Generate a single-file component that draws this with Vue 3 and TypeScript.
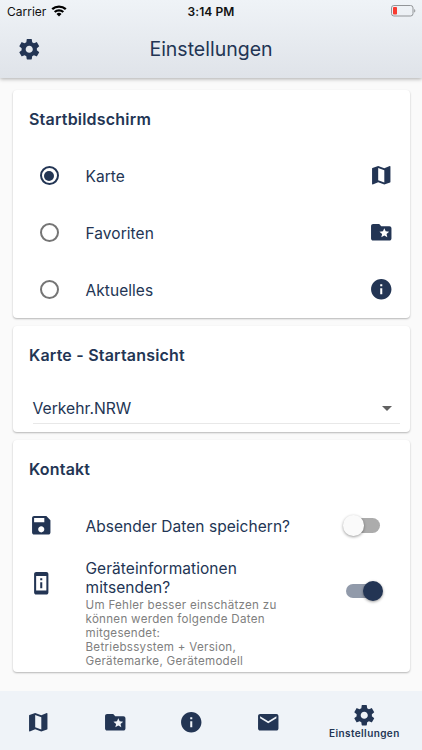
<script setup lang="ts">
import { ref } from 'vue'

const icons = {
  map: 'M20.5 3l-.16.03L15 5.1 9 3 3.36 4.9c-.21.07-.36.25-.36.48V20.5c0 .28.22.5.5.5l.16-.03L9 18.9l6 2.1 5.64-1.9c.21-.07.36-.25.36-.48V3.5c0-.28-.22-.5-.5-.5zM15 19l-6-2.11V5l6 2.11V19z',
  folder: 'M20 6h-8l-2-2H4c-1.1 0-2 .9-2 2v12c0 1.1.9 2 2 2h16c1.1 0 2-.9 2-2V8c0-1.1-.9-2-2-2zm-2.06 11L15 15.28 12.06 17l.78-3.33-2.59-2.24 3.41-.29L15 8l1.34 3.14 3.41.29-2.59 2.24.78 3.33z',
  info: 'M12 2C6.48 2 2 6.48 2 12s4.48 10 10 10 10-4.48 10-10S17.52 2 12 2zm1 15h-2v-6h2v6zm0-8h-2V7h2v2z',
  mail: 'M20 4H4c-1.1 0-1.99.9-1.99 2L2 18c0 1.1.9 2 2 2h16c1.1 0 2-.9 2-2V6c0-1.1-.9-2-2-2zm0 4l-8 5-8-5V6l8 5 8-5v2z',
  settings: 'M19.43 12.98c.04-.32.07-.64.07-.98s-.03-.66-.07-.98l2.11-1.65c.19-.15.24-.42.12-.64l-2-3.46c-.12-.22-.39-.3-.61-.22l-2.49 1c-.52-.4-1.08-.73-1.69-.98l-.38-2.65C14.46 2.18 14.25 2 14 2h-4c-.25 0-.46.18-.49.42l-.38 2.65c-.61.25-1.17.59-1.69.98l-2.49-1c-.23-.09-.49 0-.61.22l-2 3.46c-.13.22-.07.49.12.64l2.11 1.65c-.04.32-.07.65-.07.98s.03.66.07.98l-2.11 1.65c-.19.15-.24.42-.12.64l2 3.46c.12.22.39.3.61.22l2.49-1c.52.4 1.08.73 1.69.98l.38 2.65c.03.24.24.42.49.42h4c.25 0 .46-.18.49-.42l.38-2.65c.61-.25 1.17-.59 1.69-.98l2.49 1c.23.09.49 0 .61-.22l2-3.46c.12-.22.07-.49-.12-.64l-2.11-1.65zM12 15.5c-1.93 0-3.5-1.57-3.5-3.5s1.57-3.5 3.5-3.5 3.5 1.57 3.5 3.5-1.57 3.5-3.5 3.5z',
  save: 'M17 3H5c-1.11 0-2 .9-2 2v14c0 1.1.89 2 2 2h14c1.1 0 2-.9 2-2V7l-4-4zm-5 16c-1.66 0-3-1.34-3-3s1.34-3 3-3 3 1.34 3 3-1.34 3-3 3zm3-10H5V5h10v4z',
  device: 'M13 7h-2v2h2V7zm0 4h-2v6h2v-6zm4-9.99L7 1c-1.1 0-2 .9-2 2v18c0 1.1.9 2 2 2h10c1.1 0 2-.9 2-2V3c0-1.1-.9-1.99-2-1.99zM17 19H7V5h10v14z',
}

type IconName = keyof typeof icons

const screens: { label: string; icon: IconName }[] = [
  { label: 'Karte', icon: 'map' },
  { label: 'Favoriten', icon: 'folder' },
  { label: 'Aktuelles', icon: 'info' },
]

const tabs: { icon: IconName; label?: string }[] = [
  { icon: 'map' },
  { icon: 'folder' },
  { icon: 'info' },
  { icon: 'mail' },
  { icon: 'settings', label: 'Einstellungen' },
]

const startScreen = ref('Karte')
const saveSender = ref(false)
const sendDevice = ref(true)
</script>

<template>
  <div class="screen">
    <header class="header">
      <div class="status">
        <div class="carrier">
          <span>Carrier</span>
          <svg class="wifi" viewBox="0 0 16 12">
            <path d="M1.2 4.2a10 10 0 0 1 13.6 0" />
            <path d="M3.7 7a6.3 6.3 0 0 1 8.6 0" />
            <path class="dot" d="M8 11.6L5.5 8.9a3.6 3.6 0 0 1 5 0z" />
          </svg>
        </div>
        <span class="time">3:14 PM</span>
        <div class="power">
          <svg class="battery" viewBox="0 0 25 12">
            <rect class="shell" x=".5" y=".5" width="21.5" height="10.5" rx="2.4" />
            <rect class="charge" x="2" y="2" width="4" height="7.5" rx=".8" />
            <path class="cap" d="M23.2 4v3.6c1.5-.4 1.5-3.2 0-3.6z" />
          </svg>
        </div>
      </div>
      <div class="bar">
        <svg class="icon" viewBox="0 0 24 24"><path :d="icons.settings" /></svg>
        <h1>Einstellungen</h1>
      </div>
    </header>

    <main class="content">
      <section class="card">
        <h2>Startbildschirm</h2>
        <div v-for="s in screens" :key="s.label" class="row option" @click="startScreen = s.label">
          <span class="radio" :class="{ checked: startScreen === s.label }"></span>
          <span class="label">{{ s.label }}</span>
          <svg class="icon" viewBox="0 0 24 24"><path :d="icons[s.icon]" /></svg>
        </div>
      </section>

      <section class="card">
        <h2>Karte - Startansicht</h2>
        <div class="select">
          <span>Verkehr.NRW</span>
          <span class="caret"></span>
        </div>
      </section>

      <section class="card">
        <h2>Kontakt</h2>
        <div class="row setting">
          <svg class="icon" viewBox="0 0 24 24"><path :d="icons.save" /></svg>
          <span class="label">Absender Daten speichern?</span>
          <span class="switch" :class="{ on: saveSender }" @click="saveSender = !saveSender"></span>
        </div>
        <div class="row setting tall">
          <svg class="icon" viewBox="0 0 24 24"><path :d="icons.device" /></svg>
          <div class="label">
            Geräteinformationen<br />mitsenden?
            <p>
              Um Fehler besser einschätzen zu<br />können werden folgende Daten<br />mitgesendet:<br />Betriebssystem + Version,<br />Gerätemarke, Gerätemodell
            </p>
          </div>
          <span class="switch" :class="{ on: sendDevice }" @click="sendDevice = !sendDevice"></span>
        </div>
      </section>
    </main>

    <nav class="tabs">
      <div v-for="t in tabs" :key="t.icon" class="tab">
        <svg class="icon" viewBox="0 0 24 24"><path :d="icons[t.icon]" /></svg>
        <span v-if="t.label">{{ t.label }}</span>
      </div>
    </nav>
  </div>
</template>

<style>
body {
  margin: 0;
}
</style>

<style scoped>
.screen {
  display: flex;
  flex-direction: column;
  width: 422px;
  height: 750px;
  overflow: hidden;
  background: #fafafa;
  color: #233554;
  font-family: Inter, Roboto, sans-serif;
}
.icon {
  display: block;
  flex: none;
  width: 24.5px;
  height: 24.5px;
  fill: #233554;
}
.header {
  flex: none;
  height: 78px;
  background: linear-gradient(#eff3f7, #dfe3e9);
  box-shadow: 0 1px 4px rgba(0, 0, 0, 0.32);
}
.status {
  display: grid;
  grid-template-columns: 1fr auto 1fr;
  align-items: center;
  height: 22px;
  padding: 0 6px 0 7px;
  color: #111;
  font-size: 12px;
}
.carrier {
  display: flex;
  align-items: center;
  gap: 5px;
}
.wifi {
  width: 16px;
  height: 12px;
  fill: none;
  stroke: #000;
  stroke-width: 2.3;
}
.wifi .dot {
  fill: #000;
  stroke: none;
}
.time {
  margin-right: 1px;
  font-weight: 600;
  letter-spacing: 0.1px;
}
.power {
  display: flex;
  justify-content: flex-end;
}
.battery {
  width: 25px;
  height: 12px;
}
.shell {
  fill: none;
  stroke: #929598;
}
.charge {
  fill: #f83b30;
}
.cap {
  fill: #929598;
}
.bar {
  display: grid;
  grid-template-columns: 25px 1fr 25px;
  align-items: center;
  height: 54px;
  padding: 0 16.5px;
}
h1 {
  margin: 0;
  text-align: center;
  font-size: 19.5px;
  font-weight: 400;
  line-height: 24px;
}
.content {
  flex: 1;
  display: flex;
  flex-direction: column;
  gap: 8px;
  padding: 12px 12.5px 0;
}
.card {
  background: #fff;
  border-radius: 4px;
  box-shadow: 0 1px 2px rgba(0, 0, 0, 0.28);
}
h2 {
  box-sizing: border-box;
  height: 57px;
  margin: 0;
  padding: 19px 16.5px 0;
  font-size: 16px;
  font-weight: 600;
  line-height: 21px;
  letter-spacing: 0.2px;
}
.row {
  display: flex;
  align-items: center;
  height: 57px;
}
.option {
  padding: 0 16.5px 0 27px;
}
.label {
  flex: 1;
  font-size: 15.5px;
  line-height: 19.5px;
  letter-spacing: 0.05px;
}
.row > span.label {
  padding-top: 1.5px;
}
.radio {
  box-sizing: border-box;
  display: grid;
  place-items: center;
  width: 19px;
  height: 19px;
  margin-right: 27px;
  border: 2px solid #757575;
  border-radius: 50%;
}
.radio.checked {
  border-color: #233554;
}
.radio.checked::after {
  content: '';
  width: 10px;
  height: 10px;
  border-radius: 50%;
  background: #233554;
}
.select {
  display: flex;
  align-items: center;
  justify-content: space-between;
  height: 30px;
  margin: 0 10px 8px 20px;
  padding: 10px 7.5px 0 0;
  border-bottom: 1px solid #e8e8e8;
  font-size: 15.7px;
}
.caret {
  border: 5px solid transparent;
  border-top-color: #616161;
  border-bottom: 0;
}
.setting {
  padding: 0 26px 0 16px;
}
.setting .icon {
  margin-right: 32.5px;
}
.tall {
  box-sizing: border-box;
  height: 118px;
  align-items: flex-start;
  padding-top: 4.5px;
}
.tall .icon {
  margin-top: 12px;
}
.tall .switch {
  margin-top: 25px;
}
p {
  margin: 0;
  color: #808080;
  font-size: 11.6px;
  line-height: 14.2px;
  letter-spacing: 0.28px;
}
.switch {
  position: relative;
  width: 34px;
  height: 14.5px;
  margin-right: 3.5px;
  border-radius: 8px;
  background: #acacac;
}
.switch::after {
  content: '';
  position: absolute;
  top: -3px;
  left: -3px;
  width: 20.5px;
  height: 20.5px;
  border-radius: 50%;
  background: #fafafa;
  box-shadow: 0 1px 3px rgba(0, 0, 0, 0.4);
}
.switch.on {
  background: #919aaa;
}
.switch.on::after {
  left: 16.5px;
  background: #233554;
}
.tabs {
  flex: none;
  display: grid;
  grid-template-columns: repeat(4, 76.7px) 1fr;
  height: 59px;
  background: #eff3f8;
}
.tab {
  display: flex;
  flex-direction: column;
  align-items: center;
  justify-content: center;
  padding-top: 3px;
  font-size: 10px;
  font-weight: 600;
  line-height: 12px;
  letter-spacing: 0.4px;
}
.tab:last-child {
  padding-top: 1px;
}
</style>
